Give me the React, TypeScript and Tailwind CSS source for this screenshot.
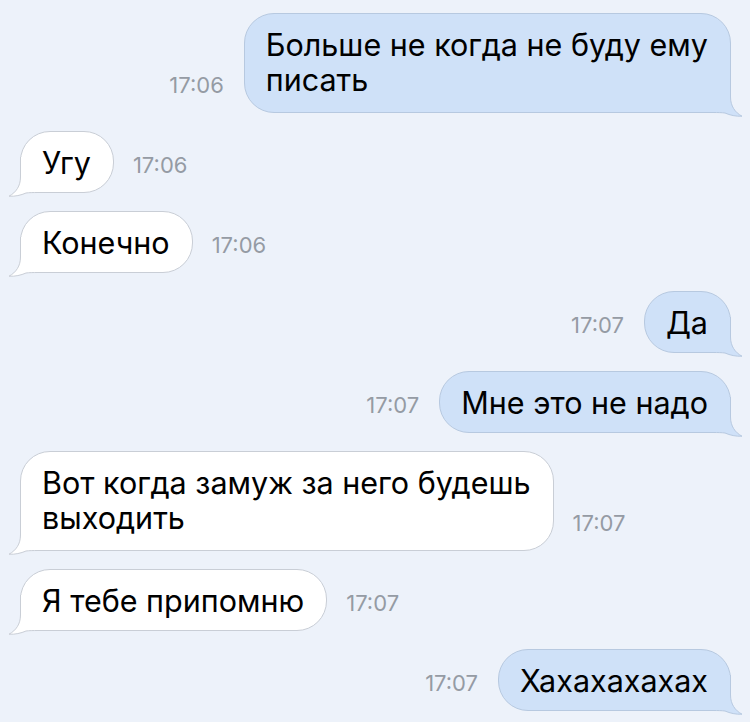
import React from "react";

type Msg = { out: boolean; lines: string[]; time: string };

const msgs: Msg[] = [
  { out: true, lines: ["Больше не когда не буду ему", "писать"], time: "17:06" },
  { out: false, lines: ["Угу"], time: "17:06" },
  { out: false, lines: ["Конечно"], time: "17:06" },
  { out: true, lines: ["Да"], time: "17:07" },
  { out: true, lines: ["Мне это не надо"], time: "17:07" },
  { out: false, lines: ["Вот когда замуж за него будешь", "выходить"], time: "17:07" },
  { out: false, lines: ["Я тебе припомню"], time: "17:07" },
  { out: true, lines: ["Хахахахахах"], time: "17:07" },
];

function Tail({ fill, stroke }: { fill: string; stroke: string }) {
  const edge =
    "M12.5,0 L12.5,20 C12.5,29 8,35.5 1,39.2 C7,39.6 13,38.2 18,36 C21,35.6 25,35.5 30,35.5 L50,35.5";
  return (
    <svg width="50" height="40" viewBox="0 0 50 40" className="block">
      <path d={edge + " L50,0 Z"} fill={fill} stroke="none" />
      <path d={edge} fill="none" stroke={stroke} strokeWidth="1" />
    </svg>
  );
}

function Bubble({ m }: { m: Msg }) {
  const bubble = m.out
    ? "bg-[#cfe1f8] border-[#b7c9e0]"
    : "bg-white border-[#c9ced6]";
  const pad = m.lines.length > 1 ? "pt-[13px] pb-[15px]" : "pt-[13px] pb-[12px]";
  return (
    <div
      className={`relative rounded-[30px] border pl-[21px] pr-[22px] ${pad} ${bubble}`}
    >
      <div
        className={`absolute bottom-[-5px] z-0 ${
          m.out ? "right-[-13px] -scale-x-100" : "left-[-13px]"
        }`}
      >
        <Tail
          fill={m.out ? "#cfe1f8" : "#ffffff"}
          stroke={m.out ? "#b7c9e0" : "#c9ced6"}
        />
      </div>
      <div className="relative z-10 whitespace-nowrap text-[30.5px] leading-[35px] text-black">
        {m.lines.map((l, i) => (
          <div key={i}>{l}</div>
        ))}
      </div>
    </div>
  );
}

function Time({ t }: { t: string }) {
  return (
    <div className="mb-[16px] text-[22px] leading-[24px] text-[#959ba4]">{t}</div>
  );
}

export default function App() {
  return (
    <div
      className="w-[750px] h-[722px] overflow-hidden bg-[#edf2fa] flex flex-col gap-[18px] pt-[13px]"
      style={{ fontFamily: "Inter, 'Noto Sans', sans-serif" }}
    >
      {msgs.map((m, i) =>
        m.out ? (
          <div key={i} className="flex items-end justify-end gap-[20px] pr-[19px]">
            <Time t={m.time} />
            <Bubble m={m} />
          </div>
        ) : (
          <div key={i} className="flex items-end gap-[19px] pl-[20px]">
            <Bubble m={m} />
            <Time t={m.time} />
          </div>
        )
      )}
    </div>
  );
}
